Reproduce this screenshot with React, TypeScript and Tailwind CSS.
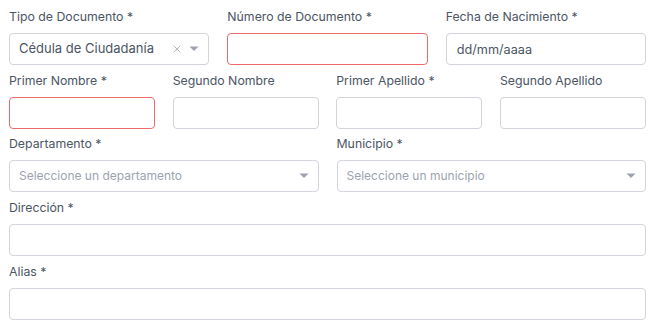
import { X } from "lucide-react";

function Label({ text }: { text: string }) {
  return <label className="block text-[12.3px] leading-[20px] text-[#4b5563] mb-[6px]">{text}</label>;
}

function Caret() {
  return (
    <svg width="10" height="6" viewBox="0 0 10 6" className="shrink-0">
      <path d="M0.5 0.5 L9.5 0.5 L5 5 Z" fill="#9ca3af" />
    </svg>
  );
}

function TextInput({ error, placeholder }: { error?: boolean; placeholder?: string }) {
  return (
    <input
      type="text"
      placeholder={placeholder}
      className={`block w-full h-[32px] rounded-[4px] border bg-white px-[10px] text-[12.7px] text-[#374151] placeholder:text-[#4b5563] focus:outline-none ${
        error ? "border-[#ef6b6b]" : "border-[#d1d5db]"
      }`}
    />
  );
}

function SelectBox({ value, placeholder, clearable }: { value?: string; placeholder?: string; clearable?: boolean }) {
  return (
    <div className="flex items-center h-[32px] w-full rounded-[4px] border border-[#d1d5db] bg-white pl-[9px] pr-[9px]">
      <span className={`flex-1 truncate ${value ? "text-[13px] text-[#4b5563]" : "text-[12px] text-[#9ca3af]"}`}>
        {value || placeholder}
      </span>
      {clearable && <X size={12} strokeWidth={1.6} className="text-[#9ca3af] mr-[6px]" />}
      <Caret />
    </div>
  );
}

export default function App() {
  return (
    <div className="w-[655px] h-[326px] bg-white px-[9px] pt-[7px] overflow-hidden" style={{ fontFamily: "Inter, 'Liberation Sans', sans-serif" }}>
      <div className="grid grid-cols-3 gap-x-[18px] mb-[6px]">
        <div>
          <Label text="Tipo de Documento *" />
          <SelectBox value="Cédula de Ciudadanía" clearable />
        </div>
        <div>
          <Label text="Número de Documento *" />
          <TextInput error />
        </div>
        <div>
          <Label text="Fecha de Nacimiento *" />
          <TextInput placeholder="dd/mm/aaaa" />
        </div>
      </div>

      <div className="grid grid-cols-4 gap-x-[17.5px] mb-[5px]">
        <div>
          <Label text="Primer Nombre *" />
          <TextInput error />
        </div>
        <div>
          <Label text="Segundo Nombre" />
          <TextInput />
        </div>
        <div>
          <Label text="Primer Apellido *" />
          <TextInput />
        </div>
        <div>
          <Label text="Segundo Apellido" />
          <TextInput />
        </div>
      </div>

      <div className="grid grid-cols-2 gap-x-[18px] mb-[6px]">
        <div>
          <Label text="Departamento *" />
          <SelectBox placeholder="Seleccione un departamento" />
        </div>
        <div>
          <Label text="Municipio *" />
          <SelectBox placeholder="Seleccione un municipio" />
        </div>
      </div>

      <div className="mb-[6px]">
        <Label text="Dirección *" />
        <TextInput />
      </div>

      <div>
        <Label text="Alias *" />
        <TextInput />
      </div>
    </div>
  );
}
